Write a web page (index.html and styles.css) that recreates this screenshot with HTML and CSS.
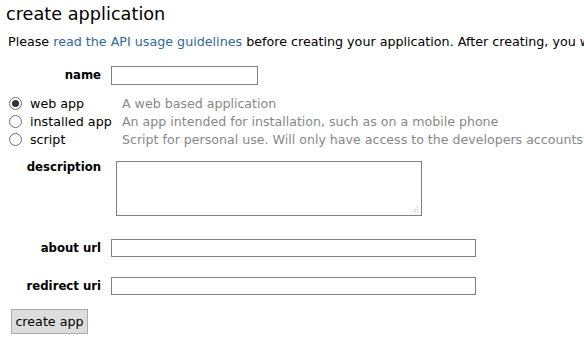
FILE: index.html
```html
<!DOCTYPE html>
<html lang="en">
<head>
    <meta charset="UTF-8">
    <title>create application</title>
    <link rel="stylesheet" href="styles.css">
</head>
<body>
    <div class="page">
        <h1>create application</h1>
        <p class="intro">Please <a href="#">read the API usage guidelines</a> before creating your application. After creating, you will be required to register for production API use.</p>

        <form class="app-form">
            <div class="row row-name">
                <label class="field-label" for="name">name</label>
                <input type="text" id="name" class="name-input">
            </div>

            <div class="app-types">
                <label class="type-row">
                    <input type="radio" name="app_type" checked>
                    <span class="type-name">web app</span>
                    <span class="type-desc">A web based application</span>
                </label>
                <label class="type-row">
                    <input type="radio" name="app_type">
                    <span class="type-name">installed app</span>
                    <span class="type-desc">An app intended for installation, such as on a mobile phone</span>
                </label>
                <label class="type-row">
                    <input type="radio" name="app_type">
                    <span class="type-name">script</span>
                    <span class="type-desc">Script for personal use. Will only have access to the developers accounts</span>
                </label>
            </div>

            <div class="row row-top">
                <label class="field-label" for="description">description</label>
                <span class="desc-wrap">
                    <textarea id="description" class="desc-input"></textarea>
                    <span class="grip"></span>
                </span>
            </div>

            <div class="row row-about">
                <label class="field-label" for="about">about url</label>
                <input type="text" id="about" class="url-input">
            </div>

            <div class="row row-redirect">
                <label class="field-label" for="redirect">redirect uri</label>
                <input type="text" id="redirect" class="url-input">
            </div>

            <button type="button" class="create-btn">create app</button>
        </form>
    </div>
</body>
</html>
```

FILE: styles.css
```css
* {
    margin: 0;
    padding: 0;
    box-sizing: border-box;
}

body {
    font-family: "DejaVu Sans", Verdana, sans-serif;
    font-size: 12.7px;
    color: #000;
    background: #fff;
    overflow: hidden;
}

.page {
    width: 584px;
    height: 344px;
    overflow: hidden;
    padding: 4px 0 0 6px;
}

h1 {
    font-size: 17.7px;
    font-weight: normal;
    line-height: 20px;
}

.intro {
    white-space: nowrap;
    margin: 10px 0 0 2px;
    line-height: 16px;
}

.intro a {
    color: #369;
    text-decoration: none;
}

.app-form {
    margin-top: 16px;
}

.row {
    display: flex;
    align-items: center;
}

.row-top {
    align-items: flex-start;
    margin-top: 13px;
}

.row-about {
    margin-top: 23px;
}

.row-redirect {
    margin-top: 20px;
}

.field-label {
    flex-shrink: 0;
    width: 95px;
    text-align: right;
    font-weight: bold;
    font-size: 11.7px;
    margin-right: 10px;
}

.row-name .field-label {
    margin-top: -2px;
}

.row-top .field-label {
    line-height: 14px;
    margin-top: -1px;
}

input[type="text"], textarea {
    border: 1px solid #808080;
    background: #fff;
    font-family: inherit;
    font-size: 12px;
}

.name-input {
    width: 147px;
    height: 19px;
}

.url-input {
    width: 365px;
    height: 18px;
}

.desc-wrap {
    position: relative;
    display: block;
    margin-left: 5px;
    height: 55px;
}

.desc-input {
    display: block;
    width: 306px;
    height: 55px;
    resize: none;
}

.grip {
    position: absolute;
    right: 4px;
    bottom: 4px;
    width: 1px;
    height: 1px;
    background: #bbb;
    box-shadow: -2px 0 #bbb, -4px 0 #bbb, 0 -2px #bbb, -2px -2px #bbb, 0 -4px #bbb;
}

.app-types {
    margin: 9px 0 0 3px;
}

.type-row {
    display: flex;
    align-items: center;
    height: 18px;
}

.type-row input {
    appearance: none;
    flex-shrink: 0;
    width: 13px;
    height: 13px;
    border: 1px solid #6e6e6e;
    border-radius: 50%;
    background: #fff;
    margin-right: 8px;
    display: flex;
    align-items: center;
    justify-content: center;
}

.type-row input:checked::after {
    content: "";
    width: 7px;
    height: 7px;
    border-radius: 50%;
    background: #333;
}

.type-name {
    flex-shrink: 0;
    width: 92px;
}

.type-desc {
    color: #888;
    white-space: nowrap;
    font-size: 12.6px;
}

.create-btn {
    margin: 14px 0 0 5px;
    width: 77px;
    height: 25px;
    font-family: inherit;
    font-size: 12.7px;
    background: #ddd;
    border: 1px solid #aaa;
    color: #000;
}
```
